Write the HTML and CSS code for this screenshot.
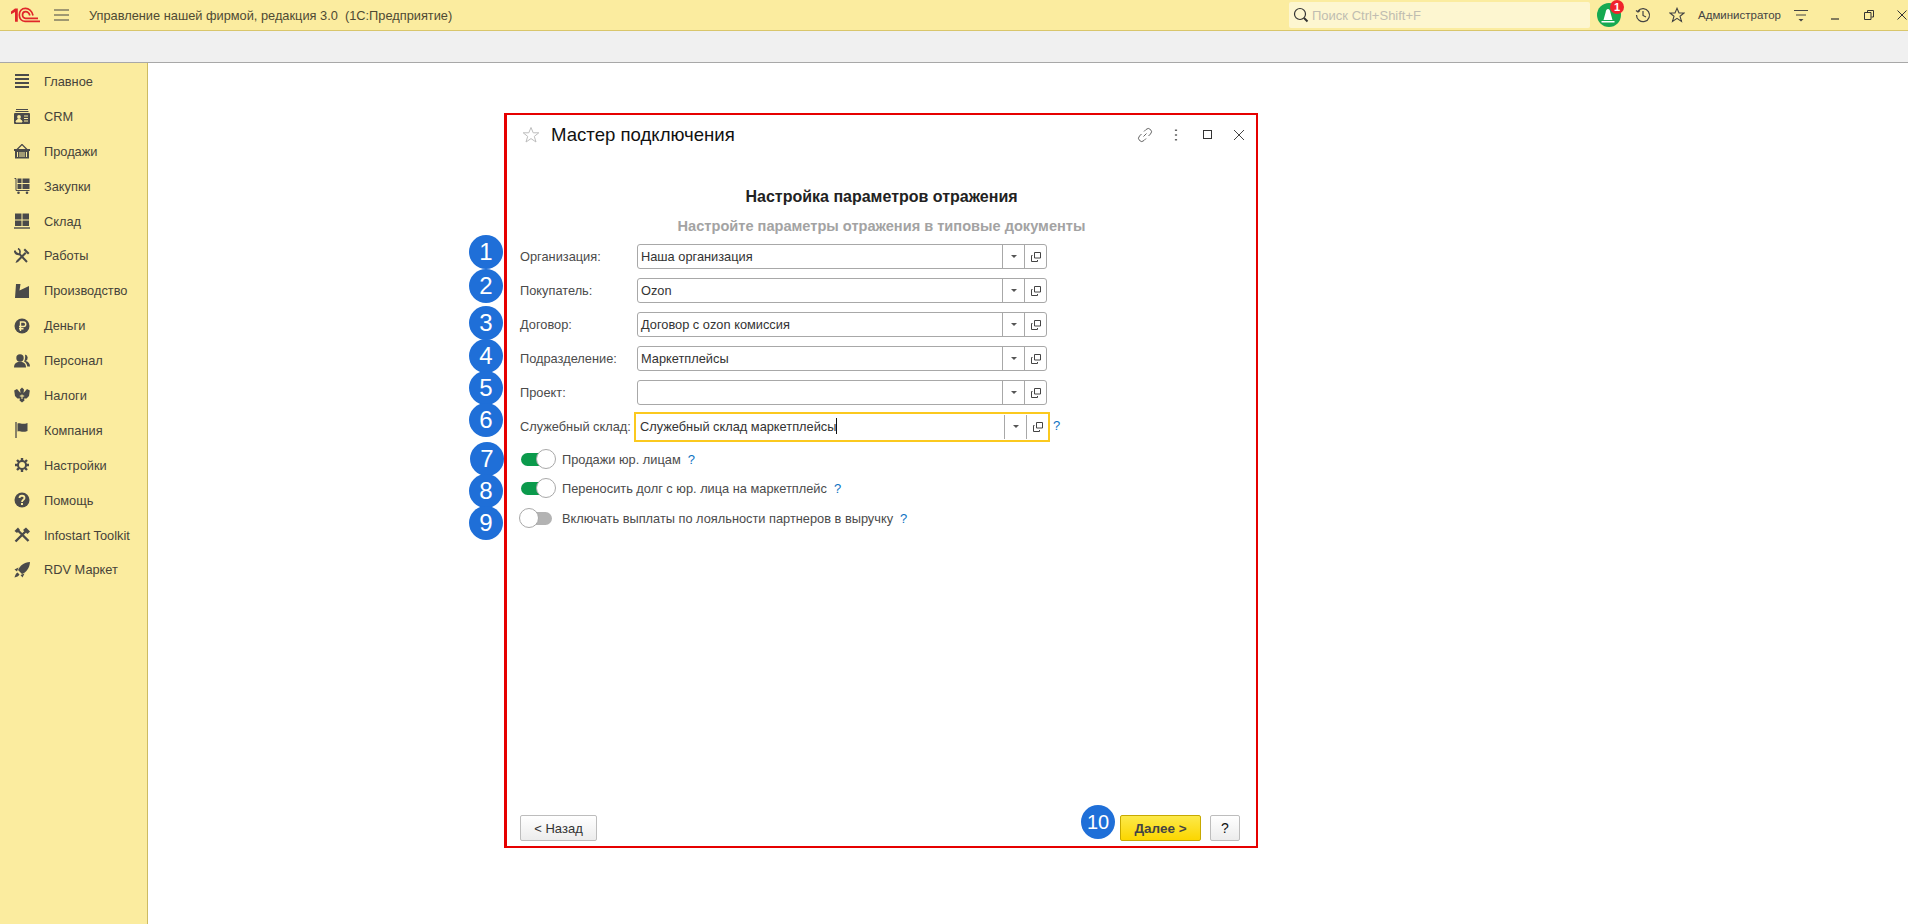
FILE: index.html
```html
<!DOCTYPE html>
<html lang="ru">
<head>
  <meta charset="UTF-8">
  <meta name="viewport" content="width=device-width, initial-scale=1.0">
  <title>Мастер подключения</title>
  <link rel="stylesheet" href="styles.css">
</head>
<body>
  <header class="topbar">
    <svg class="logo" viewBox="0 0 30 16" width="30" height="16">
      <path d="M1 4.500L5 1.500H7.800V14.800H5V5L1 7.300Z" fill="#e0262a"/>
      <path d="M23 8.500C22 3.500 18.500 1.300 15.500 1.300C11.500 1.300 9.300 4.500 9.300 8C9.300 11.500 11.500 14.300 15 14.300H30" fill="none" stroke="#e0262a" stroke-width="1.700"/>
      <path d="M19.800 8.500C19.200 6 17.500 4.600 15.500 4.600C13.500 4.600 12.500 6.300 12.500 8C12.500 9.800 13.500 11.300 15.500 11.300H28" fill="none" stroke="#e0262a" stroke-width="1.700"/>
    </svg>
    <svg class="burger" viewBox="0 0 15 12" width="15" height="12">
      <path d="M0 1H15M0 6H15M0 11H15" stroke="#444" stroke-width="1"/>
    </svg>
    <span class="app-title">Управление нашей фирмой, редакция 3.0&nbsp; (1С:Предприятие)</span>
    <div class="search">
      <svg viewBox="0 0 16 16" width="16" height="16">
        <circle cx="7" cy="7" r="5.500" fill="none" stroke="#333" stroke-width="1.200"/>
        <path d="M11 11L14.500 14.500" stroke="#333" stroke-width="2"/>
      </svg>
      <span>Поиск Ctrl+Shift+F</span>
    </div>
    <div class="bell">
      <svg viewBox="0 0 24 24" width="24" height="24">
        <circle cx="12" cy="12" r="12" fill="#16a951"/>
        <path d="M11 6C9.500 6 9 7.500 8.600 9.500L6.500 17H15.500L13.400 9.500C13 7.500 12.500 6 11 6ZM4.500 18H17.500V19.500H4.500Z" fill="#fff"/>
      </svg>
      <span class="bell-count">1</span>
    </div>
    <svg class="history" viewBox="0 0 16 16" width="16" height="16">
      <path d="M3 4A6.500 6.500 0 1 1 1.500 8M1 3.500L3 5L5 3.500M8 4V8.500L11 10" fill="none" stroke="#444" stroke-width="1.200"/>
    </svg>
    <svg class="fav" viewBox="0 0 16 16" width="16" height="16">
      <path d="M8 1.300L10 6H15L11 9.200L12.500 14.500L8 11.400L3.500 14.500L5 9.200L1 6H6Z" fill="none" stroke="#444" stroke-width="1.100"/>
    </svg>
    <span class="user">Администратор</span>
    <svg class="user-menu" viewBox="0 0 14 14" width="14" height="14">
      <path d="M0 2.500H14M2 7H12" stroke="#444"/>
      <path d="M4.500 11H9.500L7 13.500Z" fill="#444"/>
    </svg>
    <svg class="win-btn win-min" viewBox="0 0 10 10" width="10" height="10"><path d="M1 9H9" stroke="#333" stroke-width="1.200"/></svg>
    <svg class="win-btn win-restore" viewBox="0 0 10 10" width="10" height="10"><path d="M3.500 2.500V.5H9.500V7H7.500M.5 2.500H7V9.500H.5Z" fill="none" stroke="#333"/></svg>
    <svg class="win-btn win-close" viewBox="0 0 10 10" width="10" height="10"><path d="M.5 .5L9.500 9.500M9.500 .5L.5 9.500" stroke="#333"/></svg>
  </header>

  <div class="subbar"></div>

  <div class="main">
    <nav class="sidebar">
      <a class="nav-item"><svg viewBox="0 0 16 16"><path d="M1 2H15M1 6H15M1 10H15M1 14H15" stroke="#4a4a4a" stroke-width="2"/></svg>Главное</a>
      <a class="nav-item"><svg viewBox="0 0 16 16"><path d="M2 1.500H14M1.500 3.500H14.500" stroke="#4a4a4a"/><path d="M1 5H15A1 1 0 0 1 16 6V15A1 1 0 0 1 15 16H1A1 1 0 0 1 0 15V6A1 1 0 0 1 1 5Z" fill="#4a4a4a"/><circle cx="5" cy="9" r="1.900" fill="#fbec9f"/><path d="M2 14C2 12 3.500 11.500 5 11.500S8 12 8 14ZM10 8H14M10 10.500H14M10 13H14" fill="#fbec9f" stroke="#fbec9f"/></svg>CRM</a>
      <a class="nav-item"><svg viewBox="0 0 16 16"><path d="M8 1.500L3 6.500M8 1.500L13 6.500" stroke="#4a4a4a" stroke-width="1.200"/><path d="M0 6H16V8H15V15.500H1V8H0Z" fill="#4a4a4a"/><path d="M3.500 9V14M6 9V14M8 9V14M10 9V14M12.500 9V14" stroke="#fbec9f"/></svg>Продажи</a>
      <a class="nav-item"><svg viewBox="0 0 16 16"><path d="M.5 .5H2V12.500H15.500" fill="none" stroke="#4a4a4a"/><path d="M3.500 .5H7.500V5H3.500ZM8.500 .5H15.500V5H8.500ZM3.500 6H7.500V11H3.500ZM8.500 6H15.500V11H8.500Z" fill="#4a4a4a"/><circle cx="4.500" cy="14.700" r="1.300" fill="#4a4a4a"/><circle cx="13" cy="14.700" r="1.300" fill="#4a4a4a"/></svg>Закупки</a>
      <a class="nav-item"><svg viewBox="0 0 16 16"><path d="M1 .5H7.500V6.500H1ZM8.500 .5H15V6.500H8.500ZM1 7.500H7.500V13H1ZM8.500 7.500H15V13H8.500Z" fill="#4a4a4a"/><path d="M0 15H16" stroke="#4a4a4a" stroke-width="1.400"/></svg>Склад</a>
      <a class="nav-item"><svg viewBox="0 0 16 16"><path d="M.5 2.500C1.500 5.500 3.500 6.500 5.500 6L13 14" fill="none" stroke="#4a4a4a" stroke-width="2"/><path d="M4 .5C6 1.500 6.500 3.500 5.500 6" fill="none" stroke="#4a4a4a" stroke-width="1.600"/><path d="M11 .5L15.500 5L14 6.500L9.500 2ZM11 4L2.500 12.500L1.500 15L4 14L12.500 5.500Z" fill="#4a4a4a"/></svg>Работы</a>
      <a class="nav-item"><svg viewBox="0 0 16 16"><path d="M2 1H6.500L5.500 7.500L15 3V15H1Z" fill="#4a4a4a"/></svg>Производство</a>
      <a class="nav-item"><svg viewBox="0 0 16 16"><circle cx="8" cy="8" r="7.500" fill="#4a4a4a"/><path d="M6.500 13V4H9.500A2 2 0 0 1 9.500 8.500H5M5 10.700H9.500" fill="none" stroke="#fbec9f" stroke-width="1.400"/></svg>Деньги</a>
      <a class="nav-item"><svg viewBox="0 0 16 16"><circle cx="6" cy="5" r="3.700" fill="#4a4a4a"/><path d="M0 14.500C0 10 3 8.700 6 8.700S12 10 12 14.500Z" fill="#4a4a4a"/><path d="M11 1.500A3.400 3.400 0 0 1 11.500 8C14 8.500 16 10 16 13.500H13.300C13 11 12 9.500 10 8.500C11 7 11.500 4 11 1.500Z" fill="#4a4a4a"/></svg>Персонал</a>
      <a class="nav-item"><svg viewBox="0 0 16 16"><path d="M8 .5L10 2.500L9.500 6L13 2L15.800 3.500L15 9L12.500 11.500L10 11.500L10.500 13.500L8 15.500L5.500 13.500L6 11.500L3.500 11.500L1 9L.2 3.500L3 2L6.500 6L6 2.500Z" fill="#4a4a4a"/><path d="M8 7.500V12M5.800 9H10.200" stroke="#fbec9f"/></svg>Налоги</a>
      <a class="nav-item"><svg viewBox="0 0 16 16"><path d="M2 0V16" stroke="#4a4a4a" stroke-width="1.300"/><path d="M3.500 1.500C6 .5 8 3 13.500 1V9C8 11 6 8.500 3.500 9.500Z" fill="#4a4a4a"/></svg>Компания</a>
      <a class="nav-item"><svg viewBox="0 0 16 16"><path d="M8 1V15M1 8H15M3 3L13 13M13 3L3 13" stroke="#4a4a4a" stroke-width="2.400"/><circle cx="8" cy="8" r="5" fill="#4a4a4a"/><circle cx="8" cy="8" r="3" fill="#fbec9f"/></svg>Настройки</a>
      <a class="nav-item"><svg viewBox="0 0 16 16"><circle cx="8" cy="8" r="7.500" fill="#4a4a4a"/><path d="M5.500 6C5.500 3 10.500 3 10.500 6C10.500 7.800 8 7.800 8 10" fill="none" stroke="#fbec9f" stroke-width="1.800"/><rect x="7" y="11" width="2" height="2" fill="#fbec9f"/></svg>Помощь</a>
      <a class="nav-item"><svg viewBox="0 0 16 16"><path d="M3 2.500L14.500 14M1.500 14.500L12 4" fill="none" stroke="#4a4a4a" stroke-width="2.400"/><path d="M9 3L12 .5L16 4.500L13.500 7Z" fill="#4a4a4a"/><path d="M.5 4L4 .5L6 3L3 6Z" fill="#4a4a4a"/></svg>Infostart Toolkit</a>
      <a class="nav-item"><svg viewBox="0 0 16 16"><path d="M16 0C10 .5 6 3.500 4 8L8 12C12.500 10 15.500 6 16 0Z" fill="#4a4a4a"/><path d="M4.500 5.500L.5 7.500L3 9.500ZM10.500 11.500L8.500 15.500L6.500 13ZM3.500 10.500C2 11 1 13.500 .5 15.500C2.500 15 5 14 5.500 12.500Z" fill="#4a4a4a"/></svg>RDV Маркет</a>
    </nav>

    <section class="content">
      <div class="wizard">
        <div class="wizard-head">
          <svg class="wizard-star" viewBox="0 0 18 18" width="18" height="18">
            <path d="M9 1.500L11.200 6.800H16.800L12.300 10.400L14 16L9 12.600L4 16L5.700 10.400L1.200 6.800H6.800Z" fill="none" stroke="#bdbdbd"/>
          </svg>
          <h1 class="wizard-title">Мастер подключения</h1>
          <div class="wizard-tools">
            <svg viewBox="0 0 16 16" width="16" height="16"><path d="M6.500 9.500L9.500 6.500M7 4.500L9 2.500A3 3 0 0 1 13.500 7L11.500 9M9 11.500L7 13.500A3 3 0 0 1 2.500 9L4.500 7" fill="none" stroke="#666"/></svg>
            <svg viewBox="0 0 16 16" width="16" height="16"><path d="M8 2.500V4M8 7.200V8.800M8 12V13.500" stroke="#666" stroke-width="2.200"/></svg>
            <svg viewBox="0 0 16 16" width="16" height="16"><rect x="3.500" y="3.500" width="8" height="8" fill="none" stroke="#333"/></svg>
            <svg viewBox="0 0 16 16" width="16" height="16"><path d="M3 3L13 13M13 3L3 13" stroke="#444"/></svg>
          </div>
        </div>

        <h2 class="form-title">Настройка параметров отражения</h2>
        <p class="form-sub">Настройте параметры отражения в типовые документы</p>

        <div class="form">
          <div class="row"><label>Организация:</label><div class="field"><span class="val">Наша организация</span><span class="btn"><i class="caret"></i></span><span class="btn"><svg class="open" viewBox="0 0 10 10"><path d="M3.500 .5H9.500V6H3.500ZM1.500 3.500H.5V9.500H6.500V8" fill="none" stroke="#444"/></svg></span></div></div>
          <div class="row"><label>Покупатель:</label><div class="field"><span class="val">Ozon</span><span class="btn"><i class="caret"></i></span><span class="btn"><svg class="open" viewBox="0 0 10 10"><path d="M3.500 .5H9.500V6H3.500ZM1.500 3.500H.5V9.500H6.500V8" fill="none" stroke="#444"/></svg></span></div></div>
          <div class="row"><label>Договор:</label><div class="field"><span class="val">Договор с ozon комиссия</span><span class="btn"><i class="caret"></i></span><span class="btn"><svg class="open" viewBox="0 0 10 10"><path d="M3.500 .5H9.500V6H3.500ZM1.500 3.500H.5V9.500H6.500V8" fill="none" stroke="#444"/></svg></span></div></div>
          <div class="row"><label>Подразделение:</label><div class="field"><span class="val">Маркетплейсы</span><span class="btn"><i class="caret"></i></span><span class="btn"><svg class="open" viewBox="0 0 10 10"><path d="M3.500 .5H9.500V6H3.500ZM1.500 3.500H.5V9.500H6.500V8" fill="none" stroke="#444"/></svg></span></div></div>
          <div class="row"><label>Проект:</label><div class="field"><span class="val"></span><span class="btn"><i class="caret"></i></span><span class="btn"><svg class="open" viewBox="0 0 10 10"><path d="M3.500 .5H9.500V6H3.500ZM1.500 3.500H.5V9.500H6.500V8" fill="none" stroke="#444"/></svg></span></div></div>
          <div class="row"><label>Служебный склад:</label><div class="field focus"><span class="val">Служебный склад маркетплейсы<i class="cursor"></i></span><span class="btn"><i class="caret"></i></span><span class="btn"><svg class="open" viewBox="0 0 10 10"><path d="M3.500 .5H9.500V6H3.500ZM1.500 3.500H.5V9.500H6.500V8" fill="none" stroke="#444"/></svg></span><span class="hint hint-field">?</span></div></div>
        </div>

        <div class="toggles">
          <div class="toggle-row"><span class="toggle on"></span>Продажи юр. лицам<span class="hint">?</span></div>
          <div class="toggle-row"><span class="toggle on"></span>Переносить долг с юр. лица на маркетплейс<span class="hint">?</span></div>
          <div class="toggle-row"><span class="toggle"></span>Включать выплаты по лояльности партнеров в выручку<span class="hint">?</span></div>
        </div>

        <div class="wizard-foot">
          <button class="push">&lt; Назад</button>
          <button class="push primary">Далее &gt;</button>
          <button class="push help">?</button>
        </div>

        <span class="mark m1">1</span>
        <span class="mark m2">2</span>
        <span class="mark m3">3</span>
        <span class="mark m4">4</span>
        <span class="mark m5">5</span>
        <span class="mark m6">6</span>
        <span class="mark m7">7</span>
        <span class="mark m8">8</span>
        <span class="mark m9">9</span>
        <span class="mark m10">10</span>
      </div>
    </section>
  </div>
</body>
</html>
```

FILE: styles.css
```css
html, body {
  height: 100%;
}
body {
  margin: 0;
  display: flex;
  flex-direction: column;
  height: 924px;
  overflow: hidden;
  font-family: "Liberation Sans", Arial, sans-serif;
  font-size: 12.800px;
  color: #4b4b4b;
  background: #fff;
}

/* top bar */
.topbar {
  display: flex;
  align-items: center;
  flex: none;
  height: 30px;
  border-bottom: 1px solid #d9c66b;
  background: #fbec9f;
}
.logo {
  margin-left: 10px;
}
.burger {
  margin-left: 14px;
}
.app-title {
  margin-left: 20px;
  color: #4e4a33;
}
.search {
  display: flex;
  align-items: center;
  gap: 3px;
  width: 297px;
  height: 26px;
  margin-left: auto;
  padding-left: 4px;
  border-radius: 2px;
  background: #fdf6d0;
  color: #c0bdb0;
  font-size: 13px;
}
.bell {
  position: relative;
  width: 24px;
  height: 24px;
  margin-left: 7px;
}
.bell-count {
  position: absolute;
  top: -3px;
  right: -3px;
  width: 14px;
  height: 14px;
  border-radius: 50%;
  background: #f0222c;
  color: #fff;
  font-size: 11px;
  font-weight: bold;
  line-height: 14px;
  text-align: center;
}
.history {
  margin-left: 14px;
}
.fav {
  margin-left: 18px;
}
.user {
  margin-left: 13px;
  font-size: 11.500px;
  color: #444;
}
.user-menu {
  margin-left: 13px;
}
.win-min {
  margin-left: 22px;
}
.win-restore {
  margin-left: 24px;
}
.win-close {
  margin-left: 23px;
  margin-right: 1px;
}

.subbar {
  flex: none;
  height: 31px;
  border-bottom: 1px solid #a8a8a8;
  background: #f0f0f0;
}

.main {
  display: flex;
  flex: 1;
  min-height: 0;
}

/* left section panel */
.sidebar {
  flex: none;
  width: 147px;
  padding-top: 1px;
  border-right: 1px solid #cdbb62;
  background: #fbec9f;
}
.nav-item {
  display: flex;
  align-items: center;
  gap: 14px;
  height: 34.900px;
  padding-left: 14px;
  color: #46433a;
}
.nav-item svg {
  flex: none;
  width: 16px;
  height: 16px;
}

.content {
  flex: 1;
  padding: 50px 0 0 356px;
}

/* wizard window */
.wizard {
  position: relative;
  display: flex;
  flex-direction: column;
  box-sizing: border-box;
  width: 754px;
  height: 735px;
  border: 2px solid #e60000;
  border-left-width: 3px;
  background: #fff;
}
.wizard-head {
  display: flex;
  align-items: center;
  height: 40px;
  padding: 0 9px 0 15px;
}
.wizard-title {
  margin: 0 0 0 11px;
  font-size: 18.600px;
  font-weight: normal;
  color: #111;
}
.wizard-tools {
  display: flex;
  gap: 15.500px;
  margin-left: auto;
}
.form-title {
  margin: 33px 0 0;
  font-size: 16px;
  line-height: 18px;
  text-align: center;
  color: #222;
}
.form-sub {
  margin: 11px 0 0;
  font-size: 14.600px;
  font-weight: bold;
  line-height: 18px;
  text-align: center;
  color: #a3a3a3;
}

.form {
  display: flex;
  flex-direction: column;
  gap: 9px;
  margin-top: 9px;
  padding-left: 13px;
}
.row {
  display: flex;
  align-items: center;
  height: 25px;
}
.row label {
  width: 117px;
  flex: none;
  white-space: nowrap;
}
.field {
  position: relative;
  display: flex;
  box-sizing: border-box;
  width: 410px;
  height: 25px;
  border: 1px solid #a8a8a8;
  border-radius: 3px;
  color: #333;
}
.val {
  flex: 1;
  padding-left: 3px;
  line-height: 23px;
  white-space: nowrap;
}
.btn {
  display: flex;
  align-items: center;
  justify-content: center;
  flex: none;
  width: 21px;
  border-left: 1px solid #a8a8a8;
}
.caret {
  width: 0;
  height: 0;
  border: 3px solid transparent;
  border-top: 3px solid #555;
  border-bottom: 0;
}
.open {
  width: 10px;
  height: 10px;
}
.field.focus {
  width: 416px;
  height: 30px;
  margin-left: -3px;
  border: 2px solid #fbc91f;
  border-radius: 0;
}
.field.focus .val {
  padding-left: 4px;
  line-height: 26px;
}
.field.focus .btn {
  margin: 1px 0;
}
.field.focus .btn:last-of-type {
  margin-right: 2px;
}
.cursor {
  display: inline-block;
  width: 1px;
  height: 16px;
  vertical-align: -3px;
  background: #111;
}
.hint {
  margin-left: 7px;
  color: #0d72c2;
  font-size: 13px;
}
.hint-field {
  position: absolute;
  left: 100%;
  top: 4px;
  margin-left: 5px;
}

.toggles {
  display: flex;
  flex-direction: column;
  margin-top: 6px;
  padding-left: 14px;
}
.toggle-row {
  display: flex;
  align-items: center;
  height: 29.300px;
  white-space: nowrap;
}
.toggle {
  position: relative;
  flex: none;
  box-sizing: border-box;
  width: 31px;
  height: 13px;
  margin-right: 10px;
  border-radius: 7px;
  background: #b3b3b3;
}
.toggle.on {
  background: #0b9a4c;
}
.toggle::after {
  content: "";
  position: absolute;
  top: -4px;
  left: -2px;
  box-sizing: border-box;
  width: 20px;
  height: 20px;
  border: 1px solid #a8a8a8;
  border-radius: 50%;
  background: #fff;
}
.toggle.on::after {
  left: 15px;
}

.wizard-foot {
  display: flex;
  margin-top: auto;
  padding: 0 16px 5px 13px;
}
.push {
  box-sizing: border-box;
  width: 77px;
  height: 26px;
  padding: 0;
  border: 1px solid #bdbdbd;
  border-radius: 2px;
  background: linear-gradient(#fff, #ececec);
  font-family: inherit;
  font-size: 13px;
  color: #333;
}
.push.primary {
  width: 81px;
  margin-left: auto;
  border-color: #c7a900;
  background: linear-gradient(#fce94a, #fcd600);
  font-weight: bold;
  font-size: 13.500px;
  color: #444;
}
.push.help {
  width: 30px;
  margin-left: 9px;
  font-size: 14px;
  color: #111;
}

/* numbered callouts laid over the screenshot */
.mark {
  position: absolute;
  left: -38px;
  width: 34px;
  height: 34px;
  border-radius: 50%;
  background: #1f6fd8;
  color: #fff;
  font-size: 24px;
  line-height: 34px;
  text-align: center;
}
.m1 { top: 120px; }
.m2 { top: 154px; }
.m3 { top: 191px; }
.m4 { top: 224px; }
.m5 { top: 256px; }
.m6 { top: 288px; }
.m7 { top: 327px; left: -37px; }
.m8 { top: 359px; }
.m9 { top: 391px; }
.m10 { top: 690px; left: 574px; font-size: 20px; }
```
